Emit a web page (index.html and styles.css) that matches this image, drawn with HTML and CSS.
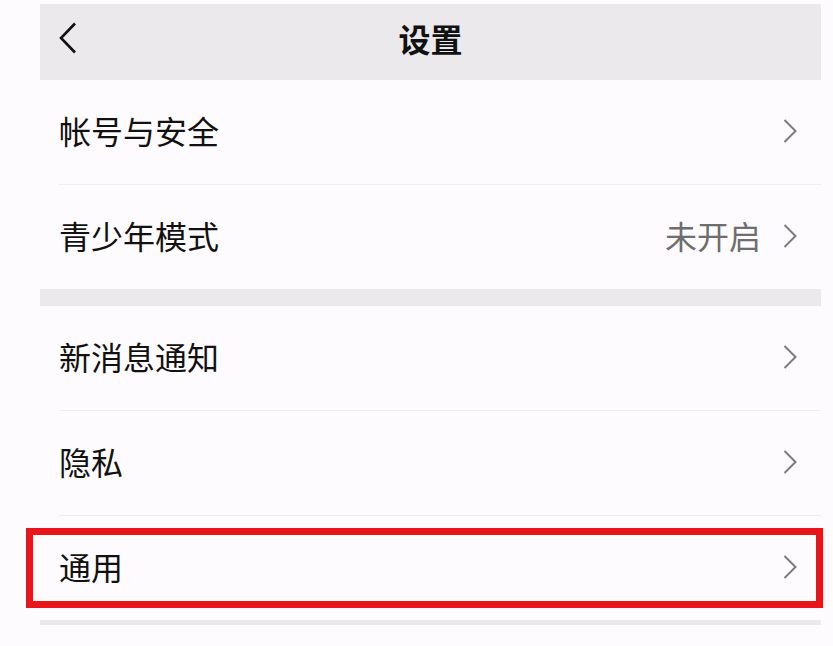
FILE: index.html
```html
<!DOCTYPE html>
<html lang="zh-CN">
<head>
    <meta charset="UTF-8">
    <meta name="viewport" content="width=device-width, initial-scale=1.0">
    <title>设置</title>
    <link rel="stylesheet" href="styles.css">
</head>
<body>
    <div class="screen">
        <div class="navbar">
            <svg class="back" width="18" height="32" viewBox="0 0 18 32">
                <polyline points="16,1.5 2,16 16,30.5" fill="none" stroke="#111" stroke-width="2.6"/>
            </svg>
            <div class="title">设置</div>
        </div>

        <div class="group">
            <div class="cell">
                <div class="cell-inner">
                    <span class="label">帐号与安全</span>
                    <svg class="arrow" width="14" height="24" viewBox="0 0 14 24">
                        <polyline points="1.5,1 12.5,12 1.5,23" fill="none" stroke="#7b7b7b" stroke-width="2"/>
                    </svg>
                </div>
            </div>
            <div class="cell">
                <div class="cell-inner last">
                    <span class="label">青少年模式</span>
                    <span class="value">未开启</span>
                    <svg class="arrow" width="14" height="24" viewBox="0 0 14 24">
                        <polyline points="1.5,1 12.5,12 1.5,23" fill="none" stroke="#7b7b7b" stroke-width="2"/>
                    </svg>
                </div>
            </div>
        </div>

        <div class="gap"></div>

        <div class="group">
            <div class="cell">
                <div class="cell-inner">
                    <span class="label">新消息通知</span>
                    <svg class="arrow" width="14" height="24" viewBox="0 0 14 24">
                        <polyline points="1.5,1 12.5,12 1.5,23" fill="none" stroke="#7b7b7b" stroke-width="2"/>
                    </svg>
                </div>
            </div>
            <div class="cell">
                <div class="cell-inner">
                    <span class="label">隐私</span>
                    <svg class="arrow" width="14" height="24" viewBox="0 0 14 24">
                        <polyline points="1.5,1 12.5,12 1.5,23" fill="none" stroke="#7b7b7b" stroke-width="2"/>
                    </svg>
                </div>
            </div>
            <div class="cell highlighted">
                <div class="cell-inner last">
                    <span class="label">通用</span>
                    <svg class="arrow" width="14" height="24" viewBox="0 0 14 24">
                        <polyline points="1.5,1 12.5,12 1.5,23" fill="none" stroke="#7b7b7b" stroke-width="2"/>
                    </svg>
                </div>
            </div>
        </div>

        <div class="gap small"></div>
    </div>
</body>
</html>
```

FILE: styles.css
```css
body {
    margin: 0;
    background-color: #fdfbfd;
    font-family: "Noto Sans CJK SC", "Noto Sans", sans-serif;
    color: #111;
    height: 646px;
    overflow: hidden;
}

.screen {
    width: 781px;
    margin-left: 40px;
    padding-top: 4px;
}

.navbar {
    height: 76px;
    background-color: #ebe9eb;
    display: flex;
    align-items: center;
    justify-content: center;
    position: relative;
}

.back {
    position: absolute;
    left: 19px;
    top: 18px;
}

.title {
    font-size: 32px;
    font-weight: 700;
    line-height: 1;
    margin-bottom: 9px;
}

.group {
    background-color: #fdfbfd;
}

.cell {
    padding-left: 19px;
    position: relative;
}

.cell-inner {
    height: 100px;
    padding-bottom: 4px;
    display: flex;
    align-items: center;
    padding-right: 24px;
    border-bottom: 1px solid #efedef;
}

.cell-inner.last {
    border-bottom: none;
}

.label {
    font-size: 32px;
    flex: 1;
}

.value {
    font-size: 32px;
    color: #6e6e6e;
    margin-right: 22px;
}

.arrow {
    display: block;
    margin-top: 2px;
}

.gap {
    height: 17px;
    background-color: #ebe9eb;
}

.gap.small {
    height: 5px;
}

.highlighted::after {
    content: "";
    position: absolute;
    left: -14px;
    right: -2px;
    top: 12px;
    bottom: 12px;
    border: 7px solid #e8151b;
}
```
